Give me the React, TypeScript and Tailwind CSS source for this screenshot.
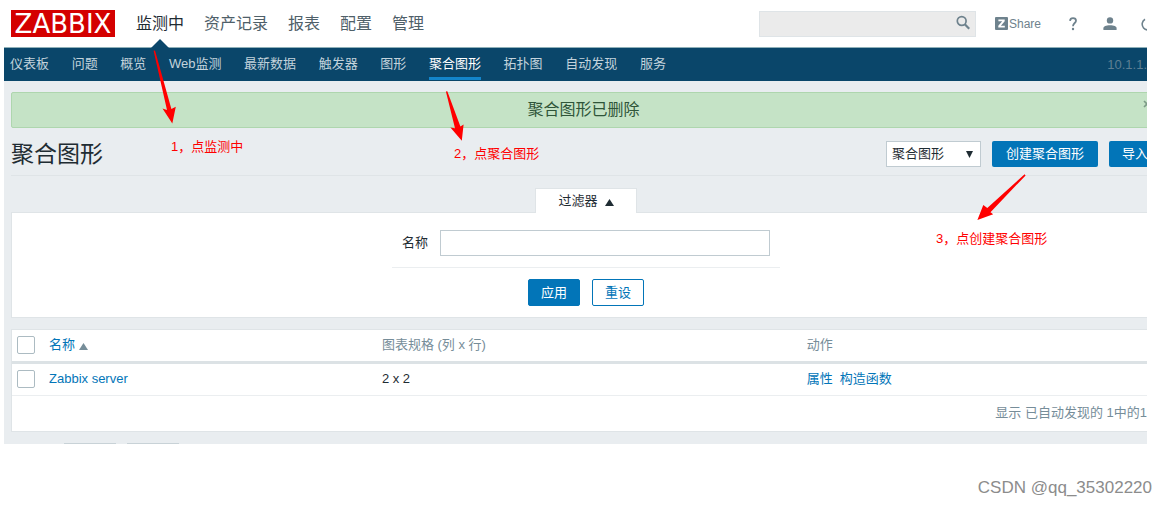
import React from 'react';

interface NavItem {
  label: string;
  active?: boolean;
}

const MAIN_MENU: NavItem[] = [
  { label: '监测中', active: true },
  { label: '资产记录' },
  { label: '报表' },
  { label: '配置' },
  { label: '管理' },
];

const SUB_MENU: NavItem[] = [
  { label: '仪表板' },
  { label: '问题' },
  { label: '概览' },
  { label: 'Web监测' },
  { label: '最新数据' },
  { label: '触发器' },
  { label: '图形' },
  { label: '聚合图形', active: true },
  { label: '拓扑图' },
  { label: '自动发现' },
  { label: '服务' },
];

const Header: React.FC = () => (
  <header className="flex h-[47px] items-center bg-white pl-[7px] pr-[13px]">
    <a href="#" className="flex h-[27px] w-[104px] items-center justify-center bg-[#d40000] font-['DejaVu_Sans'] text-[26px] leading-none text-white">
      ZABBIX
    </a>
    <nav className="ml-[21px] flex gap-5 self-stretch text-[16px] text-[#4f6069]">
      {MAIN_MENU.map((item) => (
        <a key={item.label} href="#" className={`relative flex items-center ${item.active ? 'text-[#1f2c33]' : ''}`}>
          {item.label}
          {item.active && (
            <svg className="absolute bottom-[-1px] left-1/2 h-[9px] w-[18px] -translate-x-1/2" viewBox="0 0 18 9">
              <path d="M0 9 L9 0 L18 9 Z" fill="#0a466a" />
            </svg>
          )}
        </a>
      ))}
    </nav>
    <div className="ml-auto flex items-center text-[#6e828d]">
      <div className="relative">
        <input type="text" aria-label="搜索" className="block h-[26px] w-[217px] border border-[#dfe4e7] bg-[#ebebeb] px-2 text-[13px] outline-none" />
        <button type="button" aria-label="搜索" className="absolute right-[5px] top-[4px]">
          <svg className="h-4 w-4" viewBox="0 0 16 16" fill="none" stroke="currentColor">
            <circle cx="6.7" cy="6" r="4.4" strokeWidth="1.7" />
            <path d="M9.8 9.3 L14.2 13.8" strokeWidth="2.2" />
          </svg>
        </button>
      </div>
      <a href="#" className="ml-[19px] flex items-center gap-px text-[12px]">
        <svg className="h-[13px] w-[13px]" viewBox="0 0 13 13">
          <rect width="13" height="13" rx="1" fill="currentColor" />
          <path d="M3.4 2.6 H9.7 V4.3 L5.9 8.7 H9.8 V10.4 H3.3 V8.7 L7.2 4.3 H3.4 Z" fill="#fff" />
        </svg>
        Share
      </a>
      <a href="#" aria-label="帮助" className="ml-[27px]">
        <svg className="h-[14px] w-[10px]" viewBox="0 0 10 14">
          <path d="M2 3.8 C2.2 2 3.4 1.2 5 1.2 C6.9 1.2 8 2.2 8 3.7 C8 5.9 5 6.2 5 9.2" fill="none" stroke="currentColor" strokeWidth="1.8" />
          <circle cx="5" cy="12" r="1.2" fill="currentColor" />
        </svg>
      </a>
      <a href="#" aria-label="用户" className="ml-[25px]">
        <svg className="h-[14px] w-[14px]" viewBox="0 0 14 14" fill="currentColor">
          <circle cx="7" cy="3.4" r="3.2" />
          <path d="M0.4 13 V11.4 C0.4 9.3 3 8.3 7 8.3 C11 8.3 13.6 9.3 13.6 11.4 V13 Z" />
        </svg>
      </a>
      <a href="#" aria-label="退出" className="ml-6">
        <svg className="h-[14px] w-[14px]" viewBox="0 0 14 14" fill="none" stroke="currentColor" strokeWidth="1.6">
          <path d="M4 2.2 A5.8 5.8 0 1 0 10 2.2 M7 0.5 V6.5" />
        </svg>
      </a>
    </div>
  </header>
);

const SubNav: React.FC = () => (
  <nav className="flex h-[34px] justify-between border-t border-[#8fb0b8] bg-[#0a466a] pl-[6px] pr-[21px] text-[#c3d3dc]">
    <div className="flex w-[656px] justify-between">
      {SUB_MENU.map((item) => (
        <a
          key={item.label}
          href="#"
          className={`flex h-[32px] items-center border-b-[3px] pt-[3px] ${item.active ? 'border-[#1385cb] text-white' : 'border-transparent'}`}
        >
          {item.label}
        </a>
      ))}
    </div>
    <span className="flex items-center text-[#5e7f93]">10.1.1.</span>
  </nav>
);

const Filter: React.FC = () => (
  <form className="mt-3" onSubmit={(e) => e.preventDefault()}>
    <div className="flex justify-center">
      <button type="button" className="relative z-10 -mb-px flex h-[25px] w-[102px] items-center justify-center gap-[7px] border border-b-0 border-[#dfe4e7] bg-white">
        过滤器
        <svg className="mt-[2px] h-[7px] w-[9px]" viewBox="0 0 9 7">
          <path d="M0 7 L4.5 0 L9 7 Z" fill="#1f2c33" />
        </svg>
      </button>
    </div>
    <div className="flex flex-col items-center border border-[#dfe4e7] bg-white pb-[11px] pt-[17px]">
      <div className="flex w-[388px] items-center gap-3 border-b border-[#ebeef0] pb-[11px] pl-[10px]">
        <label htmlFor="filter-name">名称</label>
        <input id="filter-name" type="text" className="h-[26px] w-[330px] border border-[#c0cbd1] bg-white px-1 outline-none" />
      </div>
      <div className="mt-[11px] flex gap-3">
        <button type="submit" className="h-[27px] rounded-[2px] border border-[#0275b8] bg-[#0275b8] px-3 text-white">应用</button>
        <button type="reset" className="h-[27px] rounded-[2px] border border-[#0275b8] bg-white px-3 text-[#0275b8]">重设</button>
      </div>
    </div>
  </form>
);

const CHECKBOX = 'block h-[18px] w-[18px] appearance-none rounded-[2px] border border-[#acbbc2] bg-white';

const ScreenTable: React.FC = () => (
  <div className="mt-[11px] border border-[#dfe4e7] bg-white">
    <table className="w-full table-fixed border-collapse text-left">
      <thead>
        <tr className="h-[32px] border-b-[3px] border-[#dce2e5] text-[#768d99]">
          <th className="w-[32px] pl-[5px]">
            <input type="checkbox" aria-label="全选" className={CHECKBOX} />
          </th>
          <th className="w-[29%] px-[5px] font-normal">
            <a href="#" className="flex items-center gap-1 text-[#0275b8]">
              名称
              <svg className="mt-[2px] h-[7px] w-[9px]" viewBox="0 0 9 7">
                <path d="M0 7 L4.5 0 L9 7 Z" fill="#768d99" />
              </svg>
            </a>
          </th>
          <th className="w-[37%] px-[5px] font-normal">图表规格 (列 x 行)</th>
          <th className="px-[5px] font-normal">动作</th>
        </tr>
      </thead>
      <tbody>
        <tr className="h-[33px] border-b border-[#ebeef0]">
          <td className="pl-[5px]">
            <input type="checkbox" aria-label="Zabbix server" className={CHECKBOX} />
          </td>
          <td className="px-[5px]">
            <a href="#" className="text-[#0275b8]">Zabbix server</a>
          </td>
          <td className="px-[5px]">2 x 2</td>
          <td className="px-[5px] text-[#0275b8]">
            <div className="flex gap-[7px]">
              <a href="#">属性</a>
              <a href="#">构造函数</a>
            </div>
          </td>
        </tr>
      </tbody>
    </table>
    <div className="flex h-[35px] items-center justify-end pr-[13px] text-[#768d99]">显示 已自动发现的 1中的1</div>
  </div>
);

// Red arrows and numbered steps that lie over the page
const Steps: React.FC = () => (
  <div className="pointer-events-none absolute inset-0 text-[13px] leading-4 text-[#ff0000]">
    <svg className="absolute left-[153px] top-[50px] h-[74px] w-[24px]" viewBox="0 0 24 74">
      <path d="M0.6 0.8 L2 0.4 L18.4 59 L22.8 56.8 L19.3 73.5 L9.5 58.5 L14 60 Z" fill="#ff0000" />
    </svg>
    <svg className="absolute left-[445px] top-[91px] h-[50px] w-[20px]" viewBox="0 0 20 50">
      <path d="M0.9 0.6 L2.3 0.2 L15.4 35.6 L18.6 33.6 L16.8 49.7 L5.4 36.4 L10 37.2 Z" fill="#ff0000" />
    </svg>
    <svg className="absolute left-[977px] top-[174px] h-[47px] w-[49px]" viewBox="0 0 49 47">
      <path d="M48.6 1.4 L47.6 0.3 L10.3 34 L6.3 31 L0.4 46 L16.2 40.2 L13.5 38.2 Z" fill="#ff0000" />
    </svg>
    <span className="absolute left-[171px] top-[139px]">1，点监测中</span>
    <span className="absolute left-[454px] top-[146px]">2，点聚合图形</span>
    <span className="absolute left-[936px] top-[231px]">3，点创建聚合图形</span>
  </div>
);

const App: React.FC = () => {
  return (
    <div className="relative bg-white font-['Liberation_Sans','Noto_Sans_CJK_SC',sans-serif] text-[13px] leading-4 text-[#1f2c33]">
      <div className="ml-1 mr-[18px] overflow-hidden">
        <div className="-mr-[21px] bg-[#e9edf0]">
          <Header />
          <SubNav />
          <main className="px-[7px] pt-[11px]">
            <div className="relative flex h-[36px] items-center justify-center rounded-[2px] border border-[#aed6ae] bg-[#c5e3c6] pr-[5px] text-[16px] text-[#2f5539]">
              聚合图形已删除
              <button type="button" aria-label="关闭" className="absolute right-[9px] top-[7px] text-[#7c9a86]">
                <svg className="h-2 w-2" viewBox="0 0 8 8" stroke="currentColor" strokeWidth="1.6">
                  <path d="M1 1 L7 7 M7 1 L1 7" />
                </svg>
              </button>
            </div>

            <div className="flex h-[48px] items-center justify-between border-b border-[#dfe4e7] pb-[1px] pt-[6px]">
              <h1 className="text-[23px] leading-7">聚合图形</h1>
              <div className="flex gap-[11px]">
                <div className="relative">
                  <select aria-label="页面类型" className="h-[26px] w-[95px] appearance-none border border-[#c0cbd1] bg-white pl-[5px] outline-none">
                    <option>聚合图形</option>
                  </select>
                  <svg className="pointer-events-none absolute right-[8px] top-[10px] h-[7px] w-[7px]" viewBox="0 0 7 7">
                    <path d="M0 0 H7 L3.5 7 Z" fill="#1f2c33" />
                  </svg>
                </div>
                <button type="button" className="h-[26px] w-[106px] rounded-[2px] bg-[#0275b8] text-white">创建聚合图形</button>
                <button type="button" className="h-[26px] w-[52px] rounded-[2px] bg-[#0275b8] text-white">导入</button>
              </div>
            </div>

            <Filter />
            <ScreenTable />

            <div className="flex h-[12px] items-end gap-[11px] pl-[53px]">
              <div className="h-px w-[52px] bg-[#c8d2d7]" />
              <div className="h-px w-[52px] bg-[#c8d2d7]" />
            </div>
          </main>
        </div>
      </div>

      <div className="mt-[34px] pr-[13px] text-right text-[17px] leading-5 text-[#8c8c8c]">CSDN @qq_35302220</div>

      <Steps />
    </div>
  );
};

export default App;
